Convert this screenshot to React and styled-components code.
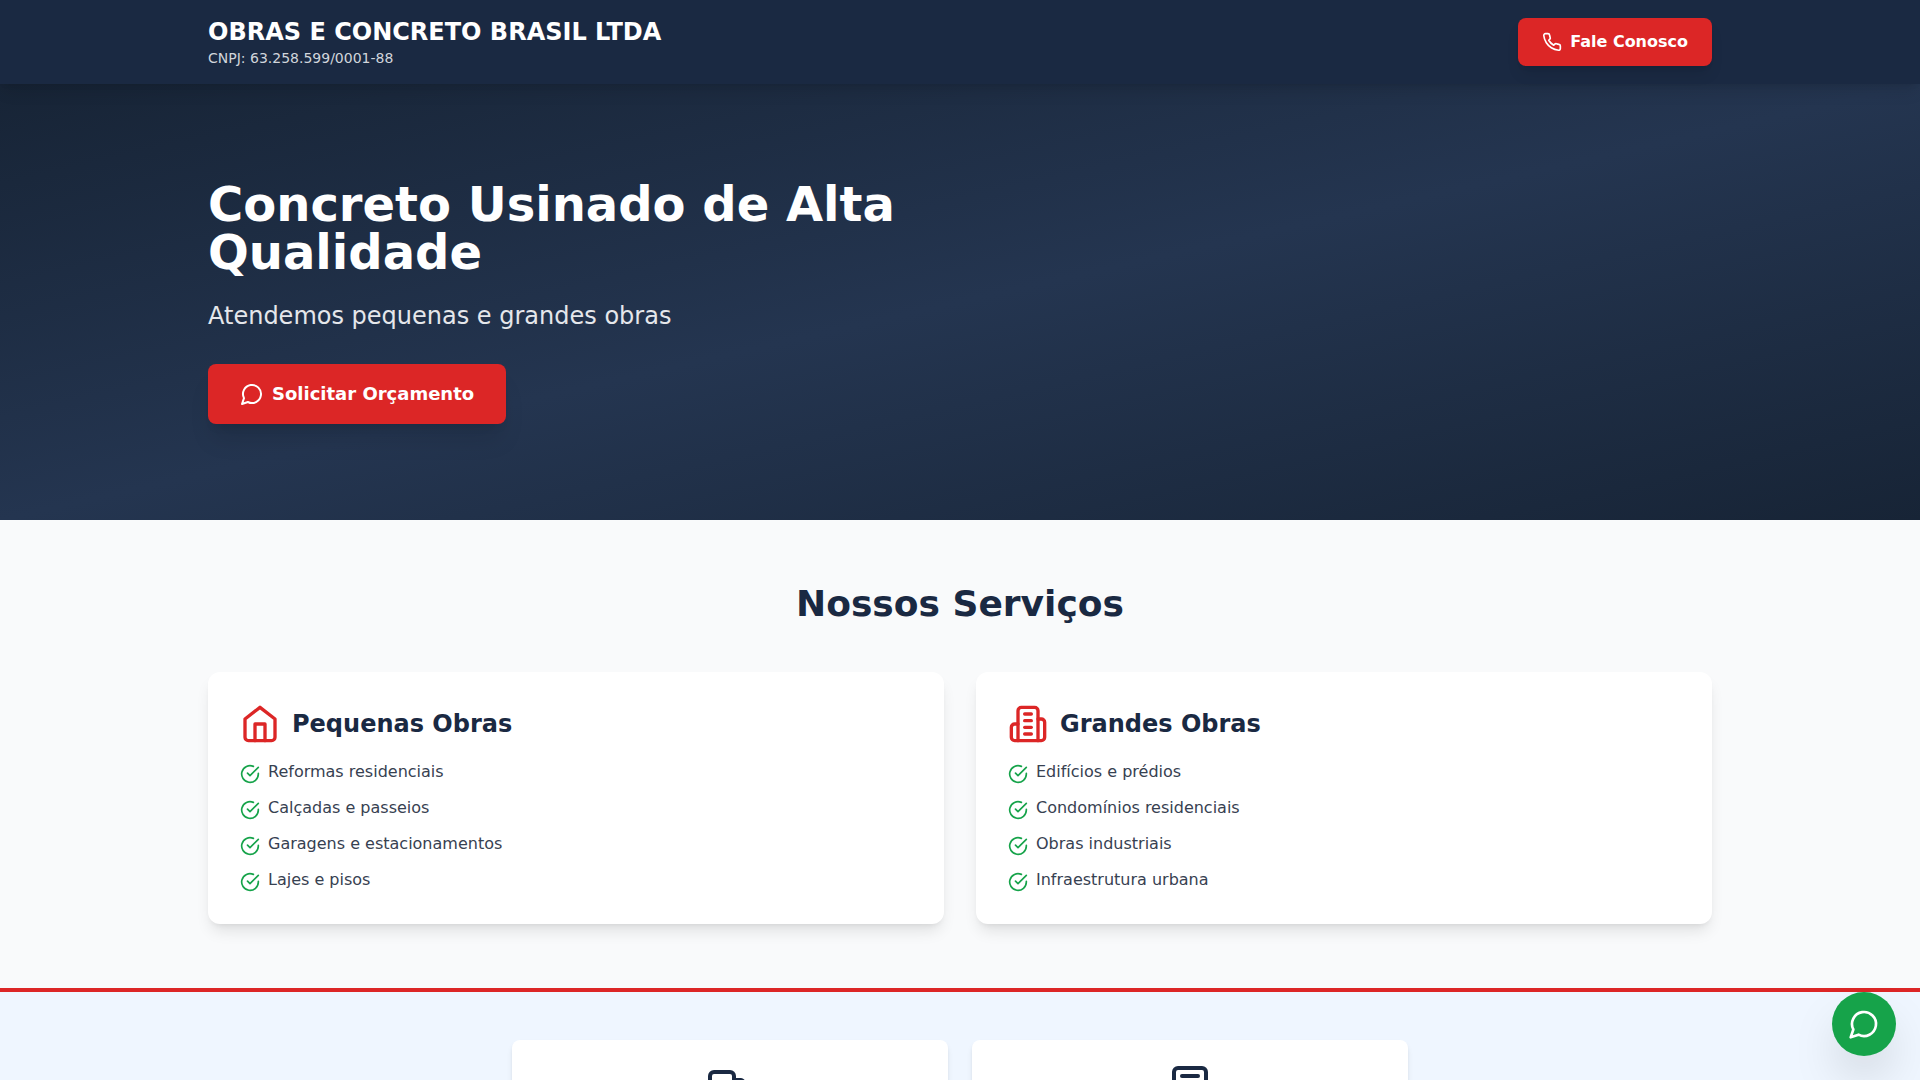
import styled, { createGlobalStyle } from 'styled-components'

const services = [
  {
    title: 'Pequenas Obras',
    icon: 'home',
    items: [
      'Reformas residenciais',
      'Calçadas e passeios',
      'Garagens e estacionamentos',
      'Lajes e pisos',
    ],
  },
  {
    title: 'Grandes Obras',
    icon: 'building',
    items: [
      'Edifícios e prédios',
      'Condomínios residenciais',
      'Obras industriais',
      'Infraestrutura urbana',
    ],
  },
]

const features = ['truck', 'calculator']

const paths = {
  phone: [
    'M22 16.92v3a2 2 0 0 1-2.18 2 19.79 19.79 0 0 1-8.63-3.07 19.5 19.5 0 0 1-6-6 19.79 19.79 0 0 1-3.07-8.67A2 2 0 0 1 4.11 2h3a2 2 0 0 1 2 1.72 12.84 12.84 0 0 0 .7 2.81 2 2 0 0 1-.45 2.11L8.09 9.91a16 16 0 0 0 6 6l1.27-1.27a2 2 0 0 1 2.11-.45 12.84 12.84 0 0 0 2.81.7A2 2 0 0 1 22 16.92z',
  ],
  message: ['M7.9 20A9 9 0 1 0 4 16.1L2 22Z'],
  home: [
    'm3 9 9-7 9 7v11a2 2 0 0 1-2 2H5a2 2 0 0 1-2-2z',
    'M9 22V12h6v10',
  ],
  building: [
    'M6 22V4a2 2 0 0 1 2-2h8a2 2 0 0 1 2 2v18Z',
    'M6 12H4a2 2 0 0 0-2 2v6a2 2 0 0 0 2 2h2',
    'M18 9h2a2 2 0 0 1 2 2v9a2 2 0 0 1-2 2h-2',
    'M10 6h4',
    'M10 10h4',
    'M10 14h4',
    'M10 18h4',
  ],
  check: ['M22 11.08V12a10 10 0 1 1-5.93-9.14', 'm9 11 3 3L22 4'],
  truck: [
    'M14 18V6a2 2 0 0 0-2-2H4a2 2 0 0 0-2 2v11a1 1 0 0 0 1 1h2',
    'M15 18H9',
    'M19 18h2a1 1 0 0 0 1-1v-3.65a1 1 0 0 0-.22-.624l-3.48-4.35A1 1 0 0 0 17.52 8H14',
    'M19 18a2 2 0 1 1-4 0a2 2 0 1 1 4 0',
    'M9 18a2 2 0 1 1-4 0a2 2 0 1 1 4 0',
  ],
  calculator: [
    'M6 2h12a2 2 0 0 1 2 2v16a2 2 0 0 1-2 2H6a2 2 0 0 1-2-2V4a2 2 0 0 1 2-2Z',
    'M8 6h8',
    'M16 14v4',
    'M16 10h.01',
    'M12 10h.01',
    'M8 10h.01',
    'M12 14h.01',
    'M8 14h.01',
    'M12 18h.01',
    'M8 18h.01',
  ],
}

const Icon = ({ name, size }) => (
  <svg
    width={size}
    height={size}
    viewBox='0 0 24 24'
    fill='none'
    stroke='currentColor'
    strokeWidth='2'
    strokeLinecap='round'
    strokeLinejoin='round'
    aria-hidden='true'
  >
    {paths[name].map((d) => (
      <path key={d} d={d} />
    ))}
  </svg>
)

const App = () => {
  return (
    <>
      <GlobalStyle />
      <Header>
        <HeaderInner>
          <div>
            <Brand>OBRAS E CONCRETO BRASIL LTDA</Brand>
            <Cnpj>CNPJ: 63.258.599/0001-88</Cnpj>
          </div>
          <Button type='button'>
            <Icon name='phone' size={20} />
            Fale Conosco
          </Button>
        </HeaderInner>
      </Header>

      <main>
        <Hero>
          <Container>
            <HeroContent>
              <HeroTitle>Concreto Usinado de Alta Qualidade</HeroTitle>
              <HeroText>Atendemos pequenas e grandes obras</HeroText>
              <Button type='button' $large>
                <Icon name='message' size={24} />
                Solicitar Orçamento
              </Button>
            </HeroContent>
          </Container>
        </Hero>

        <Services>
          <Container>
            <SectionTitle>Nossos Serviços</SectionTitle>
            <ServiceGrid>
              {services.map(({ title, icon, items }) => (
                <ServiceCard key={title}>
                  <CardHead>
                    <Icon name={icon} size={40} />
                    <h3>{title}</h3>
                  </CardHead>
                  <CheckList>
                    {items.map((item) => (
                      <li key={item}>
                        <Icon name='check' size={20} />
                        <span>{item}</span>
                      </li>
                    ))}
                  </CheckList>
                </ServiceCard>
              ))}
            </ServiceGrid>
          </Container>
        </Services>

        <Features>
          <FeatureGrid>
            {features.map((name) => (
              <FeatureCard key={name}>
                <Icon name={name} size={48} />
              </FeatureCard>
            ))}
          </FeatureGrid>
        </Features>
      </main>

      <FloatingButton type='button' aria-label='WhatsApp'>
        <Icon name='message' size={32} />
      </FloatingButton>
    </>
  )
}

const shadowLg = `0 10px 15px -3px rgba(0, 0, 0, 0.1),
    0 4px 6px -4px rgba(0, 0, 0, 0.1)`
const shadowXl = `0 20px 25px -5px rgba(0, 0, 0, 0.1),
    0 8px 10px -6px rgba(0, 0, 0, 0.1)`

const GlobalStyle = createGlobalStyle`
  *, *::before, *::after {
    box-sizing: border-box;
  }
  body {
    margin: 0;
    background: #fff;
    font-family: 'DejaVu Sans', sans-serif;
    font-size: 16px;
    line-height: 24px;
  }
  h1, h2, h3, p, ul {
    margin: 0;
    padding: 0;
  }
  svg {
    display: block;
    flex-shrink: 0;
  }
`

const Container = styled.div`
  max-width: 1536px;
  margin: 0 auto;
  padding: 0 16px;
`

const Header = styled.header`
  position: sticky;
  top: 0;
  z-index: 10;
  padding: 16px 0;
  background: #1a2942;
  color: #fff;
  box-shadow: ${shadowLg};
`

const HeaderInner = styled(Container)`
  display: flex;
  align-items: center;
  justify-content: space-between;
`

const Brand = styled.h1`
  font-size: 24px;
  line-height: 32px;
  font-weight: 700;
`

const Cnpj = styled.p`
  font-size: 14px;
  line-height: 20px;
  color: #d1d5db;
`

const Button = styled.button`
  display: inline-flex;
  align-items: center;
  gap: 8px;
  padding: ${({ $large }) => ($large ? '16px 32px' : '12px 24px')};
  border: 0;
  border-radius: 8px;
  background: #dc2626;
  color: #fff;
  font-family: inherit;
  font-size: ${({ $large }) => ($large ? '18px' : '16px')};
  line-height: ${({ $large }) => ($large ? '28px' : '24px')};
  font-weight: 600;
  cursor: pointer;
  box-shadow: ${({ $large }) => ($large ? shadowXl : shadowLg)};

  &:hover {
    background: #b91c1c;
  }
`

const Hero = styled.section`
  padding: 96px 0;
  background: linear-gradient(to bottom right, #172436, #243550, #172436);
  color: #fff;
`

const HeroContent = styled.div`
  max-width: 768px;
`

const HeroTitle = styled.h2`
  margin-bottom: 24px;
  font-size: 48px;
  line-height: 48px;
  font-weight: 700;
`

const HeroText = styled.p`
  margin-bottom: 32px;
  font-size: 24px;
  line-height: 32px;
  color: #e5e7eb;
`

const Services = styled.section`
  padding: 64px 0;
  background: #f9fafb;
`

const SectionTitle = styled.h2`
  margin-bottom: 48px;
  font-size: 36px;
  line-height: 40px;
  font-weight: 700;
  text-align: center;
  color: #1a2942;
`

const ServiceGrid = styled.div`
  display: grid;
  grid-template-columns: 1fr 1fr;
  gap: 32px;

  @media screen and (max-width: 767px) {
    grid-template-columns: 1fr;
  }
`

const ServiceCard = styled.article`
  padding: 32px;
  border-radius: 12px;
  background: #fff;
  box-shadow: ${shadowLg};
`

const CardHead = styled.div`
  display: flex;
  align-items: center;
  gap: 12px;
  margin-bottom: 16px;
  color: #dc2626;

  h3 {
    font-size: 24px;
    line-height: 32px;
    font-weight: 700;
    color: #1a2942;
  }
`

const CheckList = styled.ul`
  display: flex;
  flex-direction: column;
  gap: 12px;
  list-style: none;
  color: #374151;

  li {
    display: flex;
    align-items: flex-start;
    gap: 8px;
  }
  svg {
    margin-top: 4px;
    color: #16a34a;
  }
`

const Features = styled.section`
  padding: 48px 16px;
  border-top: 4px solid #dc2626;
  background: #eff6ff;
`

const FeatureGrid = styled.div`
  display: grid;
  grid-template-columns: 1fr 1fr;
  gap: 24px;
  max-width: 896px;
  margin: 0 auto;
`

const FeatureCard = styled.div`
  display: flex;
  justify-content: center;
  padding: 24px;
  border-radius: 8px;
  background: #fff;
  color: #1a2942;
  box-shadow: 0 4px 6px -1px rgba(0, 0, 0, 0.1),
    0 2px 4px -2px rgba(0, 0, 0, 0.1);
`

const FloatingButton = styled.button`
  position: fixed;
  right: 24px;
  bottom: 24px;
  z-index: 20;
  padding: 16px;
  border: 0;
  border-radius: 50%;
  background: #16a34a;
  color: #fff;
  cursor: pointer;
  box-shadow: 0 25px 50px -12px rgba(0, 0, 0, 0.25);
`

export default App
